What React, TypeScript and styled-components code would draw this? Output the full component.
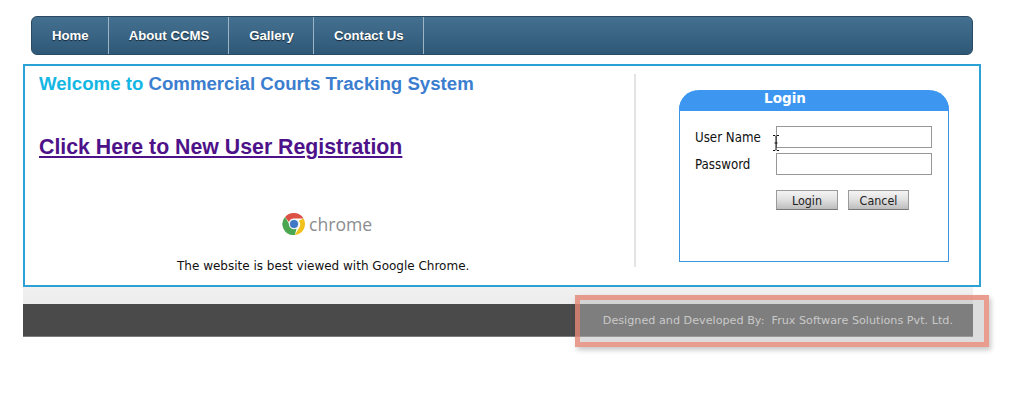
import React from 'react';
import styled, { createGlobalStyle } from 'styled-components';

const GlobalStyle = createGlobalStyle`
  html, body {
    margin: 0;
    padding: 0;
    background: #fff;
    font-family: "Liberation Sans", Arial, sans-serif;
  }
`;

const navItems = ['Home', 'About CCMS', 'Gallery', 'Contact Us'];

const ChromeLogo = () => (
  <svg width="24" height="24" viewBox="0 0 48 48" aria-hidden="true">
    <path d="M24 2a22 22 0 0 1 19.05 11H24a11 11 0 0 0-10.2 6.9L6.1 9.9A22 22 0 0 1 24 2z" fill="#dd5044" />
    <path d="M43.05 13A22 22 0 0 1 25.5 46l9.6-15.9A11 11 0 0 0 33.5 17.6z M33.5 13h9.55" fill="#f2c21c" />
    <path d="M25.5 46A22 22 0 0 1 6.1 9.9l9.4 16.3A11 11 0 0 0 29 33.8z" fill="#4aa64f" />
    <circle cx="24" cy="24" r="10.5" fill="#e9eef3" />
    <circle cx="24" cy="24" r="8" fill="#3f78c4" />
  </svg>
);

const TextCursor = () => (
  <svg width="8" height="16" viewBox="0 0 8 16" aria-hidden="true">
    <path d="M1 .5h2l1 1 1-1h2M4 1.5v13M1 15.5h2l1-1 1 1h2M2.5 8h3" fill="none" stroke="#111" strokeWidth="1" />
  </svg>
);

const App = () => (
  <Page>
    <GlobalStyle />
    <NavBar>
      {navItems.map((item) => (
        <NavItem key={item}>{item}</NavItem>
      ))}
    </NavBar>

    <MainBox>
      <LeftColumn>
        <Title>
          <span>Welcome to </span>Commercial Courts Tracking System
        </Title>
        <RegisterLink href="#">Click Here to New User Registration</RegisterLink>
        <ChromeBlock>
          <ChromeLogo />
          <ChromeWord>chrome</ChromeWord>
        </ChromeBlock>
        <BestViewed>The website is best viewed with Google Chrome.</BestViewed>
      </LeftColumn>

      <RightColumn>
        <LoginCard>
          <LoginHeader>Login</LoginHeader>
          <LoginBody>
            <FieldRow>
              <FieldLabel>User Name</FieldLabel>
              <FieldInput type="text" />
              <CursorMark>
                <TextCursor />
              </CursorMark>
            </FieldRow>
            <FieldRow>
              <FieldLabel>Password</FieldLabel>
              <FieldInput type="password" />
            </FieldRow>
            <ButtonRow>
              <LoginButton $width={62}>Login</LoginButton>
              <LoginButton $width={61}>Cancel</LoginButton>
            </ButtonRow>
          </LoginBody>
        </LoginCard>
      </RightColumn>
    </MainBox>

    <Footer>
      <FooterBand />
      <FooterBar>Designed and Developed By:&nbsp; Frux Software Solutions Pvt. Ltd.</FooterBar>
    </Footer>
    <Highlight />
  </Page>
);

export default App;

const Page = styled.div`
  position: relative;
  width: 1020px;
  height: 414px;
  padding-top: 16px;
  box-sizing: border-box;
  overflow: hidden;
`;

const NavBar = styled.nav`
  display: flex;
  width: 942px;
  height: 39px;
  margin-left: 31px;
  box-sizing: border-box;
  border: 1px solid #2a4a63;
  border-radius: 6px;
  background: linear-gradient(#44708f, #2f5877);
`;

const NavItem = styled.a`
  display: flex;
  align-items: center;
  padding: 0 19px 0 20px;
  border-right: 1px solid #9db4c5;
  color: #fff;
  font-size: 13.2px;
  font-weight: 700;
  text-shadow: 0 1px 1px rgba(0, 0, 0, 0.6);
`;

const MainBox = styled.main`
  display: flex;
  width: 958px;
  height: 223px;
  margin: 9px 0 0 23px;
  box-sizing: border-box;
  border: 2px solid #2ba1d6;
`;

const LeftColumn = styled.div`
  display: flex;
  flex-direction: column;
  width: 609px;
  padding: 7px 0 0 14px;
  box-sizing: border-box;
`;

const Title = styled.h1`
  margin: 0;
  color: #3b7ecf;
  font-size: 18.65px;
  line-height: 22px;
  font-weight: 700;

  span {
    color: #14b6e4;
  }
`;

const RegisterLink = styled.a`
  align-self: flex-start;
  margin-top: 39px;
  color: #4d1289;
  font-size: 21.3px;
  line-height: 26px;
  font-weight: 700;
`;

const ChromeBlock = styled.div`
  display: flex;
  align-items: center;
  gap: 3px;
  margin: 52px 0 0 243px;
`;

const ChromeWord = styled.span`
  color: #8b8d90;
  font-family: "Open Sans", sans-serif;
  font-size: 17.6px;
  line-height: 24px;
`;

const BestViewed = styled.p`
  margin: 22px 0 0 138px;
  color: #111;
  font-family: "DejaVu Sans", sans-serif;
  font-size: 12px;
  line-height: 16px;
`;

const RightColumn = styled.div`
  width: 315px;
  height: 193px;
  margin-top: 8px;
  padding: 16px 0 0 43px;
  box-sizing: border-box;
  border-left: 2px solid #e4e4e4;
`;

const LoginCard = styled.section`
  width: 270px;
  height: 172px;
  box-sizing: border-box;
  border: 1px solid #3d95e0;
  border-top: 0;
  border-radius: 20px 20px 0 0;
`;

const LoginHeader = styled.h2`
  height: 21px;
  margin: 0 -1px;
  padding-right: 58px;
  border-radius: 20px 20px 0 0;
  background: #3d97f0;
  color: #fff;
  font-family: "DejaVu Sans", sans-serif;
  font-size: 13.5px;
  line-height: 17px;
  font-weight: 700;
  text-align: center;
`;

const LoginBody = styled.div`
  display: flex;
  flex-direction: column;
  gap: 5px;
  padding: 15px 0 0 15px;
`;

const FieldRow = styled.div`
  position: relative;
  display: flex;
  align-items: center;
`;

const FieldLabel = styled.label`
  width: 81px;
  color: #111;
  font-family: "DejaVu Sans", sans-serif;
  font-stretch: condensed;
  font-size: 13.2px;
`;

const FieldInput = styled.input`
  width: 156px;
  height: 22px;
  padding: 0;
  box-sizing: border-box;
  border: 1px solid #979797;
  background: #fff;
`;

const CursorMark = styled.span`
  position: absolute;
  left: 77px;
  top: 9px;
  line-height: 0;
`;

const ButtonRow = styled.div`
  display: flex;
  gap: 10px;
  margin: 10px 0 0 81px;
`;

const LoginButton = styled.button<{ $width: number }>`
  width: ${(props) => props.$width}px;
  height: 20px;
  padding: 0;
  border: 1px solid #9a9a9a;
  border-bottom-color: #777;
  background: linear-gradient(#f4f4f4, #e2e2e2 45%, #bdbdbd);
  color: #222;
  font-family: "DejaVu Sans", sans-serif;
  font-stretch: condensed;
  font-size: 12.4px;
`;

const Footer = styled.footer`
  width: 950px;
  margin-left: 23px;
`;

const FooterBand = styled.div`
  height: 17px;
  background: linear-gradient(#f1f1f1, #ececec);
`;

const FooterBar = styled.div`
  display: flex;
  align-items: center;
  justify-content: flex-end;
  height: 33px;
  padding-right: 20px;
  box-sizing: border-box;
  border-bottom: 1px solid #7c7c7c;
  background: #4a4a4a;
  color: #d8d8d8;
  font-family: "DejaVu Sans", sans-serif;
  font-size: 11.2px;
`;

const Highlight = styled.div`
  position: absolute;
  left: 575px;
  top: 295px;
  width: 414px;
  height: 52px;
  box-sizing: border-box;
  border: 5px solid rgba(228, 136, 118, 0.82);
  background: rgba(184, 184, 184, 0.48);
  background-clip: padding-box;
  box-shadow: 2px 3px 5px rgba(0, 0, 0, 0.22);
`;
